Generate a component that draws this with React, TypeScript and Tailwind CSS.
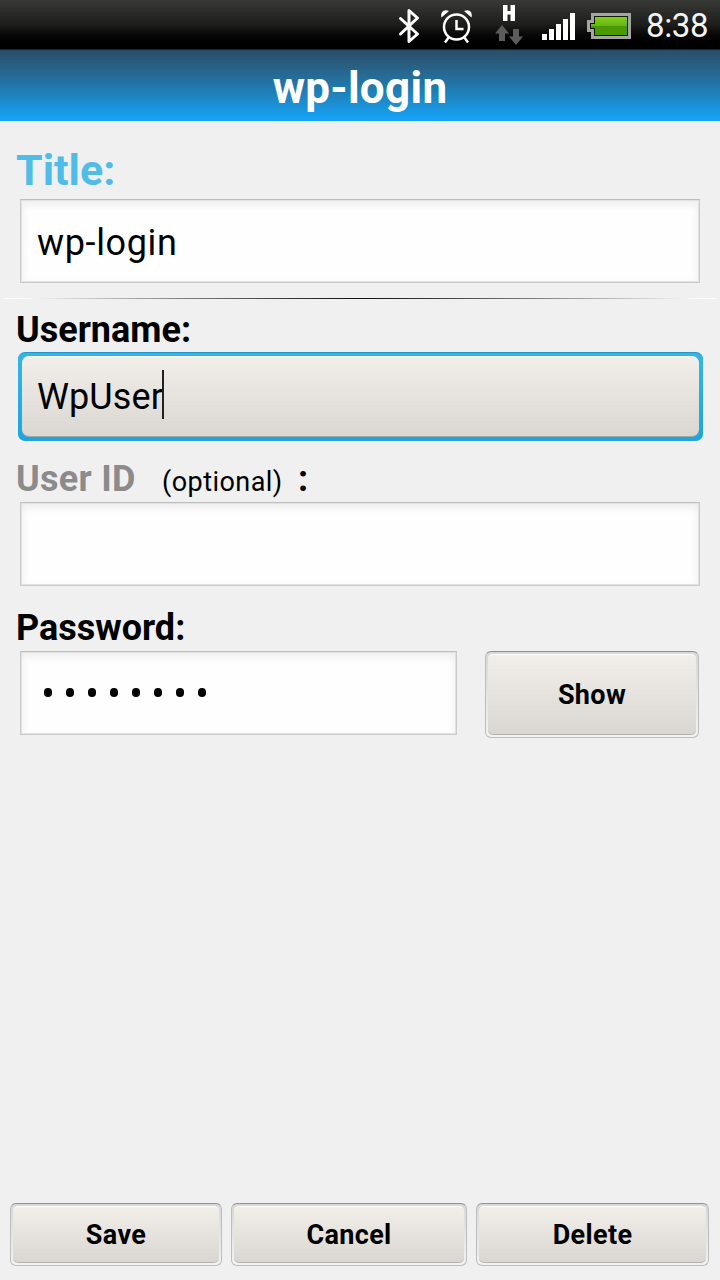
import React from "react";

function StatusBar() {
  return (
    <header className="flex h-[50px] shrink-0 items-center justify-end border-b border-[#222] bg-linear-to-b from-[#393937] via-[#1d1d1c] to-black">
      <svg className="shrink-0" width="646" height="50" viewBox="0 0 646 50" fill="none">
        <defs>
          <linearGradient id="charge" x1="0" y1="17" x2="0" y2="35" gradientUnits="userSpaceOnUse">
            <stop stopColor="#80cf20" />
            <stop offset="0.5" stopColor="#66b60b" />
            <stop offset="0.51" stopColor="#4a9800" />
            <stop offset="1" stopColor="#4b9b00" />
          </linearGradient>
        </defs>
        <path d="M400.500 18.500L417.500 34L409 41.500V10.500L417.500 18L400.500 34" stroke="#fff" strokeWidth="3" strokeLinejoin="round" strokeLinecap="round" />
        <circle cx="456.500" cy="27" r="12.500" stroke="#fff" strokeWidth="2.500" />
        <path d="M456.500 20V29H463.500M449 37L445 42.500M464 37L468 42.500" stroke="#fff" strokeWidth="2.500" />
        <path d="M441.500 17.500C440 12 444 8.500 449 11Z M471.500 17.500C473 12 469 8.500 464 11Z" fill="#fff" />
        <path d="M503 5h4.500v6h3V5h4.500v16h-4.500v-6.500h-3V21H503z" fill="#fff" />
        <path d="M502 25L509 33.500H505V41H499V33.500H495Z M516 45L509 36.500H513V29H519V36.500H523Z" fill="#5c5c5c" />
        <path d="M542 34h5v6h-5zM549 29h5v11h-5zM556 24h5v16h-5zM563 19h5v21h-5zM570 13h5v27h-5z" fill="#fff" />
        <path d="M591 13H631V39H591V32H587V20H591Z" fill="#a5a5a5" />
        <path d="M594 16H628V36H594V29H590V23H594Z" fill="#101b05" />
        <path d="M595 17H627V35H595V28H591V24H595Z" fill="url(#charge)" />
      </svg>
      <span className="w-[74px] whitespace-nowrap pt-[3px] text-[33px] leading-[50px] tracking-[-0.4px] text-[#f5f5f5]">8:38</span>
    </header>
  );
}

function Field({ children, className = "" }: { children?: React.ReactNode; className?: string }) {
  return (
    <div className={"flex h-[84px] shrink-0 items-center border border-[#cbcbcb] border-t-[#bdbdbd] bg-[#fefefe] pl-[16px] pt-[3px] text-[36px] tracking-[0.65px] shadow-[inset_0_0_0_1px_#e2e2e2,inset_0_4px_10px_#ebebeb] " + className}>
      {children}
    </div>
  );
}

function Button({ label, className }: { label: string; className: string }) {
  return (
    <button className={"flex rounded-[6px] border border-[#bdbdbd] border-t-[#929292] bg-linear-to-b from-[#d8d8d8] to-[#f2f2f2] p-[2px] " + className}>
      <span className="flex flex-1 items-center justify-center self-stretch rounded-[5px] border-t border-b border-t-white border-b-[#b5b2b0] bg-linear-to-b from-[#f2efea] via-[#e6e3de] to-[#dad6d2] pt-[2px] text-[27px] font-bold tracking-[0.35px]">
        {label}
      </span>
    </button>
  );
}

export default function App() {
  return (
    <div className="flex h-[1280px] w-[720px] flex-col overflow-hidden bg-[#f0f0f0] font-['Roboto',sans-serif] text-black">
      <StatusBar />
      <h1 className="flex h-[71px] shrink-0 items-center justify-center bg-linear-to-b from-[#2a4d66] via-[#2077a9] to-[#12a5fb] pt-[4px] text-[44px] font-bold tracking-[0.3px] text-white">wp-login</h1>
      <main className="flex flex-1 flex-col">
        <label className="mt-[23px] ml-4 h-[55px] shrink-0 text-[43px] leading-[52px] font-bold text-[#50bce8]">Title:</label>
        <Field className="mx-5">wp-login</Field>
        <div className="mx-1 mt-[15px] h-px shrink-0 bg-linear-to-r from-white from-2% via-[#111] to-white to-98%" />
        <label className="mt-[10px] ml-4 h-[43px] shrink-0 text-[36px] leading-[42px] font-bold">Username:</label>
        <div className="mr-[17px] ml-[18px] flex h-[89px] shrink-0 rounded-[7px] border-t border-[#2296c4] bg-linear-to-b from-[#35b5e5] to-[#1aa6df] px-[4px] pt-[3px] pb-[4px] shadow-[0_2px_0_#fff]">
          <div className="flex flex-1 items-center rounded-[7px] border-t border-b border-t-white border-b-[#a9a5a2] bg-linear-to-b from-[#f2efea] to-[#dad6d2] pl-[15px] text-[36px] tracking-[0.1px]">
            <span>WpUser</span>
            <span className="-ml-px mb-[4px] h-[49px] w-[2px] bg-[#222]" />
          </div>
        </div>
        <label className="mt-[17px] ml-4 flex h-[44px] shrink-0 items-baseline whitespace-pre text-[36px] leading-[42px] font-bold">
          <span className="w-[146px] tracking-[0.3px] text-[#8b8b8b]">User ID</span>
          <span className="w-[136px] text-[27px] font-normal tracking-[0.45px]">(optional)</span>
          <span>:</span>
        </label>
        <Field className="mx-5" />
        <label className="mt-[21px] ml-4 h-[44px] shrink-0 text-[36px] leading-[42px] font-bold">Password:</label>
        <div className="ml-5 flex shrink-0">
          <Field className="w-[437px]">
            <span className="mb-[4px] ml-[7px] flex gap-[14px]">
              {Array.from({ length: 8 }, (_, i) => (
                <span key={i} className="h-[9px] w-[8px] rounded-full bg-black" />
              ))}
            </span>
          </Field>
          <Button label="Show" className="ml-[28px] h-[87px] w-[214px]" />
        </div>
      </main>
      <footer className="mb-[14px] ml-[10px] flex shrink-0 gap-[9px]">
        <Button label="Save" className="h-[63px] w-[212px]" />
        <Button label="Cancel" className="h-[63px] w-[236px]" />
        <Button label="Delete" className="h-[63px] w-[233px]" />
      </footer>
    </div>
  );
}
